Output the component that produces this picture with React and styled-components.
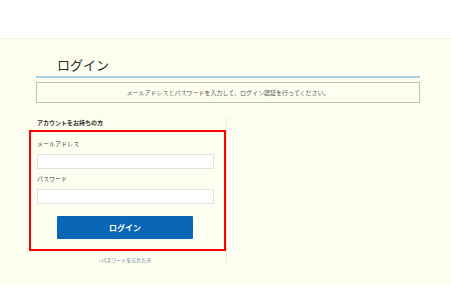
import React from "react";
import styled, { createGlobalStyle } from "styled-components";

const GlobalStyle = createGlobalStyle`
  html, body { margin: 0; padding: 0; background: #ffffff; }
  body { font-family: "Noto Sans CJK JP", "Noto Sans", sans-serif; color: #333; }
`;

const Header = styled.header`
  height: 39px;
  background: #ffffff;
  border-bottom: 1px solid #f3f3ec;
  box-sizing: border-box;
`;

const Main = styled.main`
  background: #fdfef0;
  height: 246px;
  box-sizing: border-box;
  padding-top: 19px;
`;

const Container = styled.div`
  margin-left: 36px;
  width: 384px;
`;

const Title = styled.h1`
  margin: 0;
  font-size: 13px;
  font-weight: 400;
  line-height: 13px;
  color: #2a2a2a;
  padding: 0 0 5px 21px;
  border-bottom: 2px solid #a9d3e4;
`;

const Notice = styled.p`
  margin: 4px 0 0;
  height: 21px;
  box-sizing: border-box;
  border: 1px solid #bfbfb5;
  font-size: 6px;
  line-height: 19px;
  text-align: center;
  color: #555;
`;

const Columns = styled.div`
  display: flex;
  margin-top: 14px;
`;

const LeftCol = styled.section`
  position: relative;
  width: 191px;
  border-right: 1px solid #ececde;
  padding: 2px 0 2px 0;
  box-sizing: border-box;
`;

const Heading = styled.h2`
  margin: 0 0 0 1px;
  font-size: 6px;
  line-height: 8px;
  font-weight: 700;
  color: #333;
`;

const Form = styled.form`
  width: 178px;
  display: flex;
  flex-direction: column;
`;

const Label = styled.label`
  display: block;
  margin: ${(p) => p.$top}px 0 0 1px;
  font-size: 6px;
  line-height: 8px;
  color: #444;
`;

const Input = styled.input`
  display: block;
  margin: 6px 0 0 1px;
  width: 177px;
  height: 15px;
  box-sizing: border-box;
  border: 1px solid #e2e2e2;
  background: #ffffff;
  padding: 0 4px;
  outline: none;
`;

const Button = styled.button`
  margin: 12px auto 0;
  width: 136px;
  height: 23px;
  border: none;
  border-radius: 1px;
  background: #0a66b7;
  color: #ffffff;
  font-family: inherit;
  font-size: 8px;
  font-weight: 700;
  line-height: 23px;
  padding: 0;
`;

const ForgotLink = styled.a`
  display: block;
  margin-top: 17px;
  font-size: 5px;
  line-height: 7px;
  text-align: center;
  color: #5a7898;
  text-decoration: none;
  width: 178px;
`;

const Highlight = styled.div`
  position: absolute;
  left: -7px;
  top: 13px;
  width: 197px;
  height: 121px;
  box-sizing: border-box;
  border: 2px solid #ff0000;
  pointer-events: none;
`;

export default function App() {
  return (
    <>
      <GlobalStyle />
      <Header />
      <Main>
        <Container>
          <Title>ログイン</Title>
          <Notice>メールアドレスとパスワードを入力して、ログイン認証を行ってください。</Notice>
          <Columns>
            <LeftCol>
              <Heading>アカウントをお持ちの方</Heading>
              <Form onSubmit={(e) => e.preventDefault()}>
                <Label $top={13}>メールアドレス</Label>
                <Input type="email" />
                <Label $top={6}>パスワード</Label>
                <Input type="password" />
                <Button type="submit">ログイン</Button>
              </Form>
              <ForgotLink href="#">› パスワードを忘れた方</ForgotLink>
              <Highlight />
            </LeftCol>
          </Columns>
        </Container>
      </Main>
    </>
  );
}
